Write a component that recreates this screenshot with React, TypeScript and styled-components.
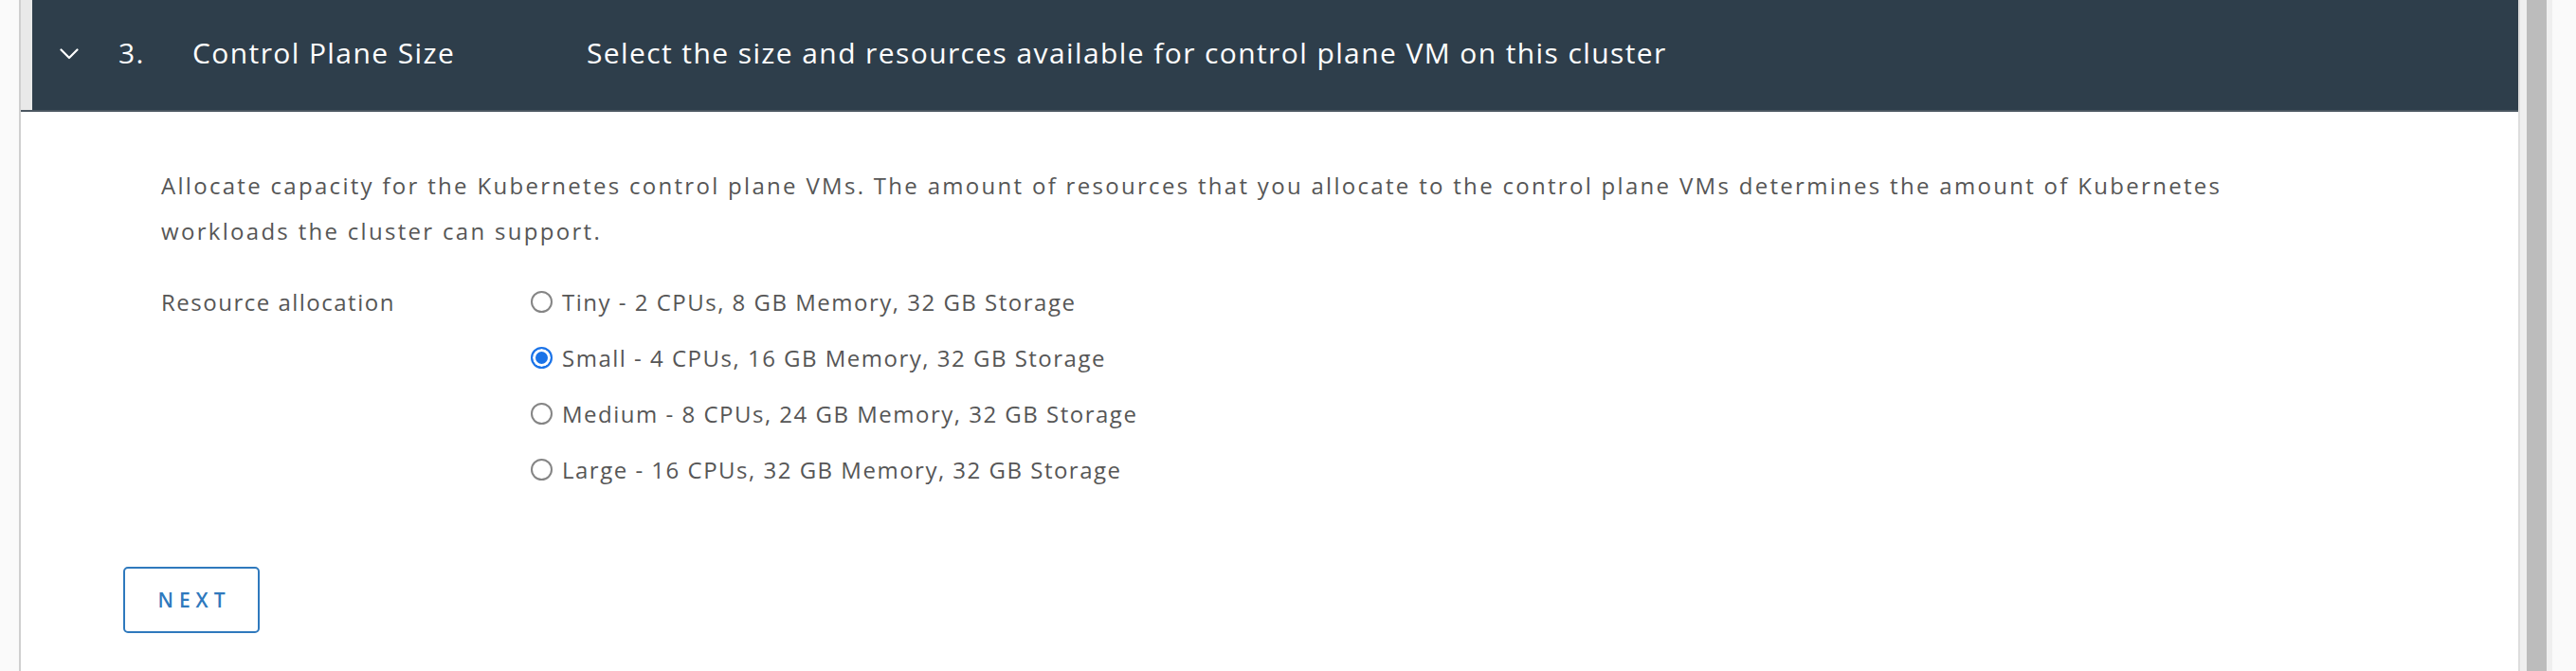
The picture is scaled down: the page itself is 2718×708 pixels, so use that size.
import React, { useState } from "react";
import styled, { createGlobalStyle } from "styled-components";

const GlobalStyle = createGlobalStyle`
  html, body {
    margin: 0;
    padding: 0;
    background: #fafafa;
  }
  body {
    font-family: "Open Sans", "Liberation Sans", sans-serif;
  }
  *, *::before, *::after {
    box-sizing: border-box;
  }
`;

const Page = styled.div`
  display: flex;
  width: 2718px;
  height: 708px;
  overflow: hidden;
  background: #fafafa;
  padding-left: 20px;
`;

const Card = styled.section`
  flex: 1;
  display: flex;
  flex-direction: column;
  background: #ffffff;
  border-left: 2px solid #cfcfcf;
  border-right: 2px solid #dddddd;
`;

const HeaderBar = styled.header`
  display: flex;
  height: 118px;
  border-bottom: 2px solid #4a5660;
`;

const HeaderStrip = styled.div`
  width: 12px;
  background: #e9e9e9;
`;

const HeaderMain = styled.div`
  flex: 1;
  display: flex;
  align-items: center;
  background: #2e3e4b;
  color: #ffffff;
  padding: 0 0 5px 29px;
  font-size: 30px;
  letter-spacing: 1.4px;
  white-space: nowrap;
`;

const ChevronBox = styled.span`
  width: 62px;
  display: flex;
  align-items: center;
  padding-top: 3px;
`;

const StepNumber = styled.span`
  width: 78px;
`;

const StepTitle = styled.span`
  width: 416px;
`;

const StepDescription = styled.span`
  flex: 1;
`;

const Body = styled.div`
  padding: 54px 0 0 108px;
  color: #565656;
  font-size: 24px;
  letter-spacing: 1.5px;
`;

const Content = styled.div`
  padding-left: 40px;
  width: 2290px;
`;

const Intro = styled.p`
  margin: 0;
  line-height: 48px;
  letter-spacing: 2.3px;
`;

const FormRow = styled.div`
  display: flex;
  margin-top: 21px;
`;

const FieldLabel = styled.div`
  width: 390px;
  line-height: 59px;
`;

const Options = styled.div`
  display: flex;
  flex-direction: column;
`;

const Option = styled.label`
  display: flex;
  align-items: center;
  height: 59px;
  gap: 10px;
  cursor: pointer;
`;

const Radio = styled.input.attrs({ type: "radio" })`
  appearance: none;
  -webkit-appearance: none;
  margin: 0;
  width: 23px;
  height: 23px;
  border-radius: 50%;
  border: 2px solid #858585;
  background: #ffffff;
  flex: none;

  &:checked {
    border-color: #1a73e8;
    background: #1a73e8;
    box-shadow: inset 0 0 0 3px #ffffff;
  }
`;

const Footer = styled.div`
  margin-top: 73px;
`;

const OutlineButton = styled.button`
  width: 144px;
  height: 70px;
  border: 2px solid #2f79bd;
  border-radius: 5px;
  background: #ffffff;
  color: #2f79bd;
  font-family: "Open Sans", "Liberation Sans", sans-serif;
  font-size: 21px;
  font-weight: 600;
  letter-spacing: 6px;
  padding: 0 0 0 6px;
  cursor: pointer;
`;

const Scrollbar = styled.div`
  width: 34px;
  display: flex;
  padding: 0 6px 0 7px;
  background: #efefef;
`;

const Thumb = styled.div`
  flex: 1;
  background: #bcbcbc;
`;

const RightGutter = styled.div`
  width: 25px;
  background: #fafafa;
`;

const Chevron = () => (
  <svg width="20" height="12" viewBox="0 0 20 12" fill="none">
    <polyline
      points="1.5,1.5 10,10 18.5,1.5"
      stroke="#ffffff"
      strokeWidth="2.2"
      strokeLinecap="round"
      strokeLinejoin="round"
    />
  </svg>
);

const sizes = [
  { id: "tiny", label: "Tiny - 2 CPUs, 8 GB Memory, 32 GB Storage" },
  { id: "small", label: "Small - 4 CPUs, 16 GB Memory, 32 GB Storage" },
  { id: "medium", label: "Medium - 8 CPUs, 24 GB Memory, 32 GB Storage" },
  { id: "large", label: "Large - 16 CPUs, 32 GB Memory, 32 GB Storage" },
];

export default function App() {
  const [size, setSize] = useState("small");
  return (
    <>
      <GlobalStyle />
      <Page>
        <Card>
          <HeaderBar>
            <HeaderStrip />
            <HeaderMain>
              <ChevronBox>
                <Chevron />
              </ChevronBox>
              <StepNumber>3.</StepNumber>
              <StepTitle>Control Plane Size</StepTitle>
              <StepDescription>
                Select the size and resources available for control plane VM on this cluster
              </StepDescription>
            </HeaderMain>
          </HeaderBar>
          <Body>
            <Content>
              <Intro>
                Allocate capacity for the Kubernetes control plane VMs. The amount of resources
                that you allocate to the control plane VMs determines the amount of Kubernetes
                workloads the cluster can support.
              </Intro>
              <FormRow>
                <FieldLabel>Resource allocation</FieldLabel>
                <Options>
                  {sizes.map((s) => (
                    <Option key={s.id}>
                      <Radio
                        name="cp-size"
                        value={s.id}
                        checked={size === s.id}
                        onChange={() => setSize(s.id)}
                      />
                      {s.label}
                    </Option>
                  ))}
                </Options>
              </FormRow>
            </Content>
            <Footer>
              <OutlineButton>NEXT</OutlineButton>
            </Footer>
          </Body>
        </Card>
        <Scrollbar>
          <Thumb />
        </Scrollbar>
        <RightGutter />
      </Page>
    </>
  );
}
